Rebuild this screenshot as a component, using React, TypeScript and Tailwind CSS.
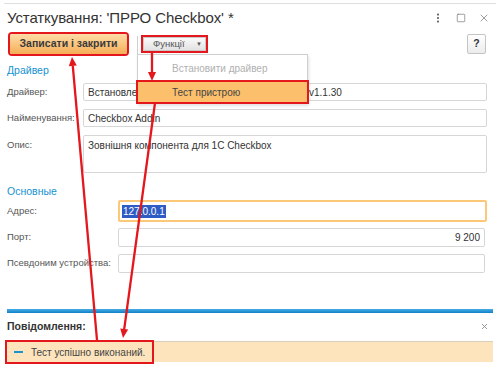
import { MoreVertical, Square, X } from "lucide-react";

const RED = "#e3171c";

function Field({ className = "", children }: { className?: string; children?: React.ReactNode }) {
  return (
    <div
      className={
        "flex items-center border border-[#d6d6d6] rounded-[2px] bg-white px-[4px] text-[10px] text-[#333] whitespace-nowrap overflow-hidden " +
        className
      }
    >
      {children}
    </div>
  );
}

function Arrow({ x1, y1, x2, y2 }: { x1: number; y1: number; x2: number; y2: number }) {
  const a = Math.atan2(y2 - y1, x2 - x1);
  const len = 9;
  const w = 4;
  const bx = x2 - len * Math.cos(a);
  const by = y2 - len * Math.sin(a);
  const p1 = `${bx + w * Math.sin(a)},${by - w * Math.cos(a)}`;
  const p2 = `${bx - w * Math.sin(a)},${by + w * Math.cos(a)}`;
  return (
    <g>
      <line x1={x1} y1={y1} x2={bx} y2={by} stroke={RED} strokeWidth={2.3} />
      <polygon points={`${x2},${y2} ${p1} ${p2}`} fill={RED} />
    </g>
  );
}

export default function App() {
  return (
    <div className="relative w-[500px] h-[369px] bg-white overflow-hidden font-['Liberation_Sans',Arial,sans-serif] text-[#404040]">
      {/* window edge */}
      <div className="mx-[4px] mt-[3px] border-t border-[#dedede]" />

      {/* ── Title ─────────────────────────────── */}
      <div className="flex items-center h-[28px] pl-[7px] pr-[10px]">
        <h1 className="text-[15px] text-[#333] tracking-[-0.1px]">Устаткування: 'ПРРО Checkbox' *</h1>
        <div className="ml-auto flex items-center gap-[12px] text-[#666]">
          <MoreVertical className="h-[12px] w-[12px]" strokeWidth={2.5} />
          <Square className="h-[10px] w-[10px]" strokeWidth={1.5} />
          <X className="h-[12px] w-[12px]" strokeWidth={1.3} />
        </div>
      </div>

      {/* ── Toolbar ───────────────────────────── */}
      <div className="flex items-center h-[24px] pr-[14px]">
        <button className="ml-[10px] w-[117px] h-[20px] rounded-[2px] bg-gradient-to-b from-[#fddca6] to-[#f5ae55] text-[10.5px] font-bold text-[#3a3a3a] ring-2 ring-[#e3171c]">
          Записати і закрити
        </button>
        <button className="ml-[16px] w-[63px] h-[14px] flex items-center pl-[9px] pr-[3px] bg-gradient-to-b from-[#fafafa] to-[#e2e2e2] border border-[#c8c8c8] text-[9.5px] text-[#555] ring-2 ring-[#e3171c]">
          <span>Функції</span>
          <span className="ml-auto text-[6px] text-[#555]">▼</span>
        </button>
        <button className="ml-auto w-[19px] h-[20px] rounded-[2px] border border-[#c4c4c4] bg-gradient-to-b from-white to-[#ececec] text-[10.5px] font-bold text-[#333]">
          ?
        </button>
      </div>

      {/* ── Драйвер section ───────────────────── */}
      <div className="px-[7px] pt-[6px]">
        <div className="text-[10.5px] text-[#1592d1] h-[16px] leading-[16px]">Драйвер</div>
        <div className="mt-[5px] flex flex-col gap-[8px]">
          <div className="flex items-center">
            <span className="w-[76px] text-[9.5px] text-[#555]">Драйвер:</span>
            <Field className="w-[404px] h-[18px]">
              {/* the middle of this value is hidden by the open menu */}
              <span className="w-[221px] shrink-0">Встановлен</span>
              <span>v1.1.30</span>
            </Field>
          </div>
          <div className="flex items-center">
            <span className="w-[76px] text-[9.5px] text-[#555] whitespace-nowrap">Найменування:</span>
            <Field className="w-[404px] h-[18px]">Checkbox Addin</Field>
          </div>
          <div className="flex items-start">
            <span className="w-[76px] text-[9.5px] text-[#555] pt-[3px]">Опис:</span>
            <div className="w-[404px] h-[38px] border border-[#d6d6d6] rounded-[2px] px-[4px] pt-[2px] text-[10px] text-[#333]">
              Зовнішня компонента для 1С Checkbox
            </div>
          </div>
        </div>

        {/* ── Основные section ──────────────────── */}
        <div className="mt-[10px] text-[10.5px] text-[#1592d1] h-[16px] leading-[16px]">Основные</div>
        <div className="mt-[1px] flex items-center">
          <span className="w-[111px] text-[9.5px] text-[#555]">Адрес:</span>
          <div className="w-[369px] h-[22px] flex items-center border-2 border-[#fbc878] rounded-[2px] px-[2px]">
            <span className="bg-[#2f5cc4] text-white text-[10px] leading-[13px] px-[1px]">127.0.0.1</span>
          </div>
        </div>
        <div className="mt-[6px] flex items-center">
          <span className="w-[111px] text-[9.5px] text-[#555]">Порт:</span>
          <Field className="w-[367px] h-[19px] justify-end">9 200</Field>
        </div>
        <div className="mt-[7px] flex items-center">
          <span className="w-[111px] text-[9.5px] text-[#555] whitespace-nowrap">Псевдоним устройства:</span>
          <Field className="w-[367px] h-[19px]" />
        </div>
      </div>

      {/* ── Messages ──────────────────────────── */}
      <div className="mt-[36px] mx-[7px] h-[4px] bg-gradient-to-b from-[#45aee6] to-[#0b80c6]" />
      <div className="mx-[7px] flex items-center h-[27px]">
        <span className="text-[10.5px] font-bold text-[#333]">Повідомлення:</span>
        <X className="ml-auto mr-[4px] h-[9px] w-[9px] text-[#777]" strokeWidth={2} />
      </div>
      <div className="mx-[7px] mt-[1px] h-[21px] flex items-center bg-[#fde4bd] border-t border-[#d9cfbd]">
        <span className="h-[20px] w-[145px] flex items-center pl-[7px] whitespace-nowrap ring-2 ring-[#e3171c]">
          <span className="w-[9px] h-[2px] bg-[#1a93cf]" />
          <span className="ml-[8px] text-[10px] text-[#444]">Тест успішно виконаний.</span>
        </span>
      </div>

      {/* ── Functions dropdown (open) ─────────── */}
      <div className="absolute left-[137px] top-[36px] h-[19px] border-l border-[#cfcfcf]" />
      <div className="absolute left-[137px] top-[54px] w-[171px] h-[50px] bg-white border border-[#cfcfcf] shadow-[1px_2px_3px_rgba(0,0,0,0.12)] flex flex-col">
        <div className="h-[26px] flex items-center pl-[34px] text-[10px] text-[#b0b0b0]">Встановити драйвер</div>
        <div className="h-[20px] mt-[1px] flex items-center pl-[34px] bg-[#fcbf6c] text-[10px] text-[#444] ring-2 ring-[#e3171c]">
          Тест пристрою
        </div>
      </div>

      {/* ── Annotation arrows ─────────────────── */}
      <svg className="absolute inset-0 pointer-events-none" width={500} height={369}>
        <Arrow x1={97} y1={340} x2={72} y2={57} />
        <Arrow x1={155} y1={103} x2={123} y2={338} />
        <Arrow x1={152} y1={52} x2={152} y2={81} />
      </svg>
    </div>
  );
}
